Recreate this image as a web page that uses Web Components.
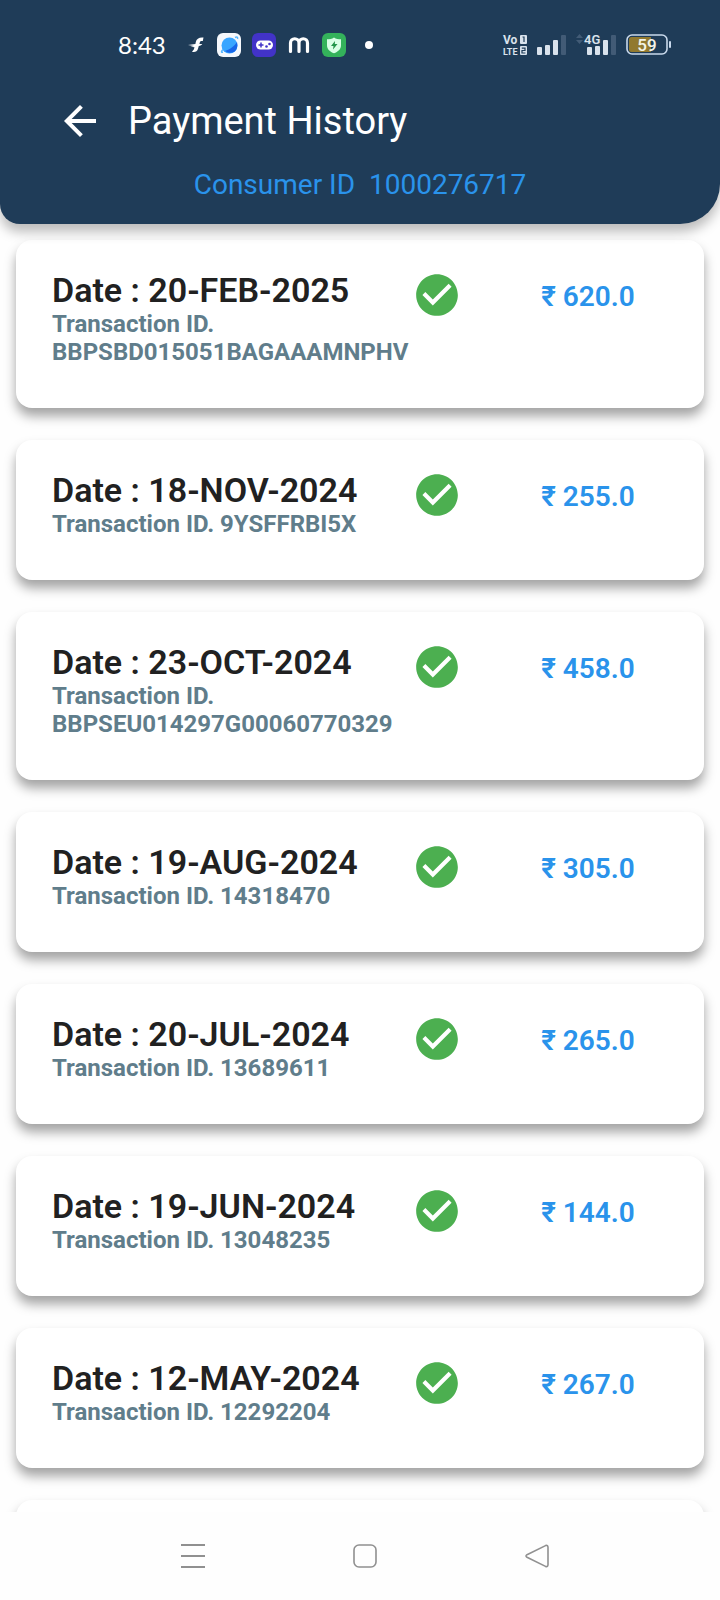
<!DOCTYPE html>
<html lang="en">
<head>
<meta charset="utf-8">
<meta name="viewport" content="width=device-width, initial-scale=1">
<title>Payment History</title>
<style>
  body { margin: 0; background: #fefefe; font-family: Roboto, sans-serif; }
</style>
</head>
<body>
<payment-app></payment-app>

<script>
const define = (name, html, setup) => {
  const template = document.createElement('template');
  template.innerHTML = html;
  customElements.define(name, class extends HTMLElement {
    constructor() {
      super();
      this.attachShadow({ mode: 'open' }).append(template.content.cloneNode(true));
    }
    connectedCallback() { if (setup) setup(this, this.shadowRoot); }
  });
};

define('status-bar', `
<style>
  :host { display: flex; align-items: center; justify-content: space-between; height: 90px; padding: 0 48px 0 118px; color: #fff; }
  svg { display: block; flex: none; overflow: visible; }
  .side { display: flex; align-items: center; }
  .apps { gap: 11px; }
  .radio { gap: 10px; }
  time { font: 400 24px/32px Lato, sans-serif; width: 49px; margin-right: 10px; }
  text { font-family: Roboto, sans-serif; }
</style>
<div class="side apps">
  <time>8:43</time>
  <svg width="18" height="24" viewBox="0 0 18 24" fill="#fff"><path d="M15.500 4.500C11.500 4 8.500 5.500 7.800 9L7.400 11 0 12l6 1-3.500.8 4 .4-.7 2.300-1.800 2.300c3 .8 5.200-.3 6-3l.8-2.800c1.700-.2 2.800-.9 3.500-2h-2.900l.4-1.500c.3-1 1-1.500 3-1.400z"/></svg>
  <svg width="24" height="24" viewBox="0 0 24 24"><rect width="24" height="24" rx="6" fill="#f5f8fc"/><circle cx="12.500" cy="12.500" r="8" fill="#38a5ff"/><path d="M8 18C13 16.500 18 12.500 20 9c2 8-4 14-12 9z" fill="#1765e8"/><path d="M18 4.500c2-1 3-.5 2.500 1.500M6 16.500c-2 2-2 3 0 2.700" fill="none" stroke="#55b6ff" stroke-width="1.500"/></svg>
  <svg width="24" height="24" viewBox="0 0 24 24"><rect width="24" height="24" rx="6" fill="#4233c8"/><rect x="4" y="7.500" width="17" height="9" rx="4.500" fill="#fff"/><path d="M6.500 12h5M9 9.500v5" stroke="#4233c8" stroke-width="1.500"/><circle cx="17.500" cy="11" r="1.300" fill="#4233c8"/><circle cx="14.500" cy="13.500" r="1.300" fill="#4233c8"/></svg>
  <svg width="24" height="24" viewBox="0 0 24 24" fill="none" stroke="#fff" stroke-width="3.200" stroke-linecap="round"><path d="M3.500 18.500V10a4.200 4.200 0 0 1 8.500 0v8.500M12 10a4.200 4.200 0 0 1 8.500 0v8.500"/></svg>
  <svg width="24" height="24" viewBox="0 0 24 24"><rect width="24" height="24" rx="6" fill="#34b25b"/><path d="M12 4.500c2 1.500 4.500 1.700 7 1.700v6c0 4-3 6.500-7 8-4-1.500-7-4-7-8v-6c2.500 0 5-.2 7-1.700z" fill="#d9ffe6"/><path d="M13 8l-4 5h2.500L11 16.500l4.500-5.500h-2.700z" fill="#22954a"/></svg>
  <svg width="24" height="24" viewBox="0 0 24 24"><circle cx="12" cy="12" r="4" fill="#fff"/></svg>
</div>
<div class="side radio">
  <svg width="24" height="24" viewBox="0 0 24 24" fill="#d9e2ec"><text x="0" y="11" font-size="12" font-weight="700">Vo</text><text x="0" y="22" font-size="9" font-weight="700">LTE</text><rect x="17" y="2" width="7" height="9" rx="1"/><rect x="17" y="13" width="7" height="9" rx="1"/><path d="M19.500 4h1.500v5M18.800 15.200h3.200v2.300h-3v2.500h3.400" fill="none" stroke="#1f3c58" stroke-width="1.200"/></svg>
  <svg width="29" height="22" viewBox="0 0 29 22" fill="#d9e2ec"><rect y="13" width="5" height="8" rx="1"/><rect x="8" y="11" width="5" height="10" rx="1"/><rect x="16" y="6" width="5" height="15" rx="1"/><rect x="24" y="1" width="5" height="20" rx="1" fill="#425b76"/></svg>
  <svg width="40" height="28" viewBox="0 -3 40 28" fill="#d9e2ec"><path d="M0 4l3.500-4L7 4zM0 6l3.500 4L7 6z" fill="#425b76"/><text x="8" y="10" font-size="13" font-weight="600">4G</text><rect x="11" y="13" width="5" height="8" rx="1"/><rect x="19" y="12" width="5" height="9" rx="1"/><rect x="27" y="6" width="5" height="15" rx="1"/><rect x="35" y="1" width="5" height="20" rx="1" fill="#425b76"/></svg>
  <svg width="46" height="22" viewBox="0 0 46 22"><rect x="1" y="1" width="40" height="19" rx="5" fill="none" stroke="#c9d9ec" stroke-width="1.600"/><path d="M5.500 3H25v15H5.500A2.500 2.500 0 0 1 3 15.500v-10A2.500 2.500 0 0 1 5.500 3z" fill="#91792f"/><rect x="43" y="7" width="2" height="7" rx="1" fill="#c9d9ec"/><text x="21" y="16.500" font-size="17" font-weight="500" text-anchor="middle" fill="#f4f4e8">59</text></svg>
</div>`);

define('page-header', `
<style>
  :host { display: block; position: relative; z-index: 1; height: 224px; background: #1f3c58; color: #fff; border-radius: 0 0 40px 20px; box-shadow: 0 8px 12px rgba(0,0,0,.26); }
  .bar { display: flex; align-items: center; gap: 24px; height: 62px; padding: 0 56px; }
  button { width: 48px; height: 48px; padding: 0; border: 0; background: none; color: inherit; }
  svg { display: block; }
  h1 { margin: 0; font-size: 38px; line-height: 48px; font-weight: 400; }
  p { margin: 0; font-size: 28px; line-height: 32px; padding-top: 17px; text-align: center; color: #2a93eb; white-space: pre; }
</style>
<status-bar></status-bar>
<div class="bar">
  <button type="button" aria-label="Back"><svg width="48" height="48" viewBox="0 0 24 24" fill="currentColor"><path d="M20 11H7.830l5.590-5.590L12 4l-8 8 8 8 1.410-1.410L7.830 13H20v-2z"/></svg></button>
  <h1><slot></slot></h1>
</div>
<p><slot name="consumer"></slot></p>`);

define('payment-card', `
<style>
  :host { display: grid; grid-template-columns: minmax(0, 1fr) 96px 160px; align-items: start; padding: 30px 36px 42px; background: #fff; border-radius: 16px; box-shadow: 0 8px 12px rgba(0,0,0,.36); }
  h2 { margin: 0; font-size: 34px; line-height: 40px; font-weight: 600; color: #212121; white-space: nowrap; }
  p { margin: 0; font-size: 24px; line-height: 28px; font-weight: 700; color: #607d8b; }
  svg { display: block; }
  .amount { padding-top: 11px; font-size: 28px; line-height: 32px; font-weight: 600; text-align: center; color: #2a93eb; white-space: nowrap; }
</style>
<div><h2>Date : <span id="date"></span></h2><p>Transaction ID. <span id="txn"></span></p></div>
<svg width="50" height="50" viewBox="0 0 24 24" role="img" aria-label="Paid"><path fill="#4caf50" d="M12 2C6.480 2 2 6.480 2 12s4.480 10 10 10 10-4.480 10-10S17.520 2 12 2zm-2 15l-5-5 1.410-1.410L10 14.170l7.590-7.590L19 8l-9 9z"/></svg>
<div class="amount">₹ <span id="amount"></span></div>`,
(host, root) => {
  if (!host.hasAttribute('date')) {
    for (const part of root.querySelectorAll('div, svg')) part.remove();
    return;
  }
  for (const key of ['date', 'txn', 'amount'])
    root.getElementById(key).textContent = host.getAttribute(key);
});

define('nav-bar', `
<style>
  :host { display: grid; grid-template-columns: repeat(3, 1fr); height: 88px; padding: 0 97px 0 107px; background: #fefefe; position: relative; z-index: 1; }
  button { display: grid; place-items: center; padding: 0; border: 0; background: none; color: #909090; }
</style>
<button type="button" aria-label="Recent apps"><svg width="24" height="24" fill="none" stroke="currentColor" stroke-width="2"><path d="M0 1h24M0 12h24M0 23h24"/></svg></button>
<button type="button" aria-label="Home"><svg width="24" height="24" fill="none" stroke="currentColor" stroke-width="1.600"><rect x="1" y="1" width="22" height="22" rx="5"/></svg></button>
<button type="button" aria-label="Back"><svg width="24" height="24" fill="none" stroke="currentColor" stroke-width="1.600" stroke-linejoin="round"><path d="M20.500 1.600L2 10.700q-2 1.300 0 2.600l18.500 9.100q2.500.8 2.500-1.900V3.500q0-2.700-2.500-1.900z"/></svg></button>`);

define('payment-app', `
<style>
  :host { display: grid; grid-template-rows: auto minmax(0, 1fr) auto; height: 100vh; }
  main { display: flex; flex-direction: column; gap: 32px; padding: 16px; overflow: hidden; }
  payment-card { flex: none; }
</style>
<page-header>Payment History<span slot="consumer">Consumer ID  1000276717</span></page-header>
<main>
  <payment-card date="20-FEB-2025" txn="BBPSBD015051BAGAAAMNPHV" amount="620.0"></payment-card>
  <payment-card date="18-NOV-2024" txn="9YSFFRBI5X" amount="255.0"></payment-card>
  <payment-card date="23-OCT-2024" txn="BBPSEU014297G00060770329" amount="458.0"></payment-card>
  <payment-card date="19-AUG-2024" txn="14318470" amount="305.0"></payment-card>
  <payment-card date="20-JUL-2024" txn="13689611" amount="265.0"></payment-card>
  <payment-card date="19-JUN-2024" txn="13048235" amount="144.0"></payment-card>
  <payment-card date="12-MAY-2024" txn="12292204" amount="267.0"></payment-card>
  <payment-card></payment-card>
</main>
<nav-bar></nav-bar>`);
</script>
</body>
</html>
